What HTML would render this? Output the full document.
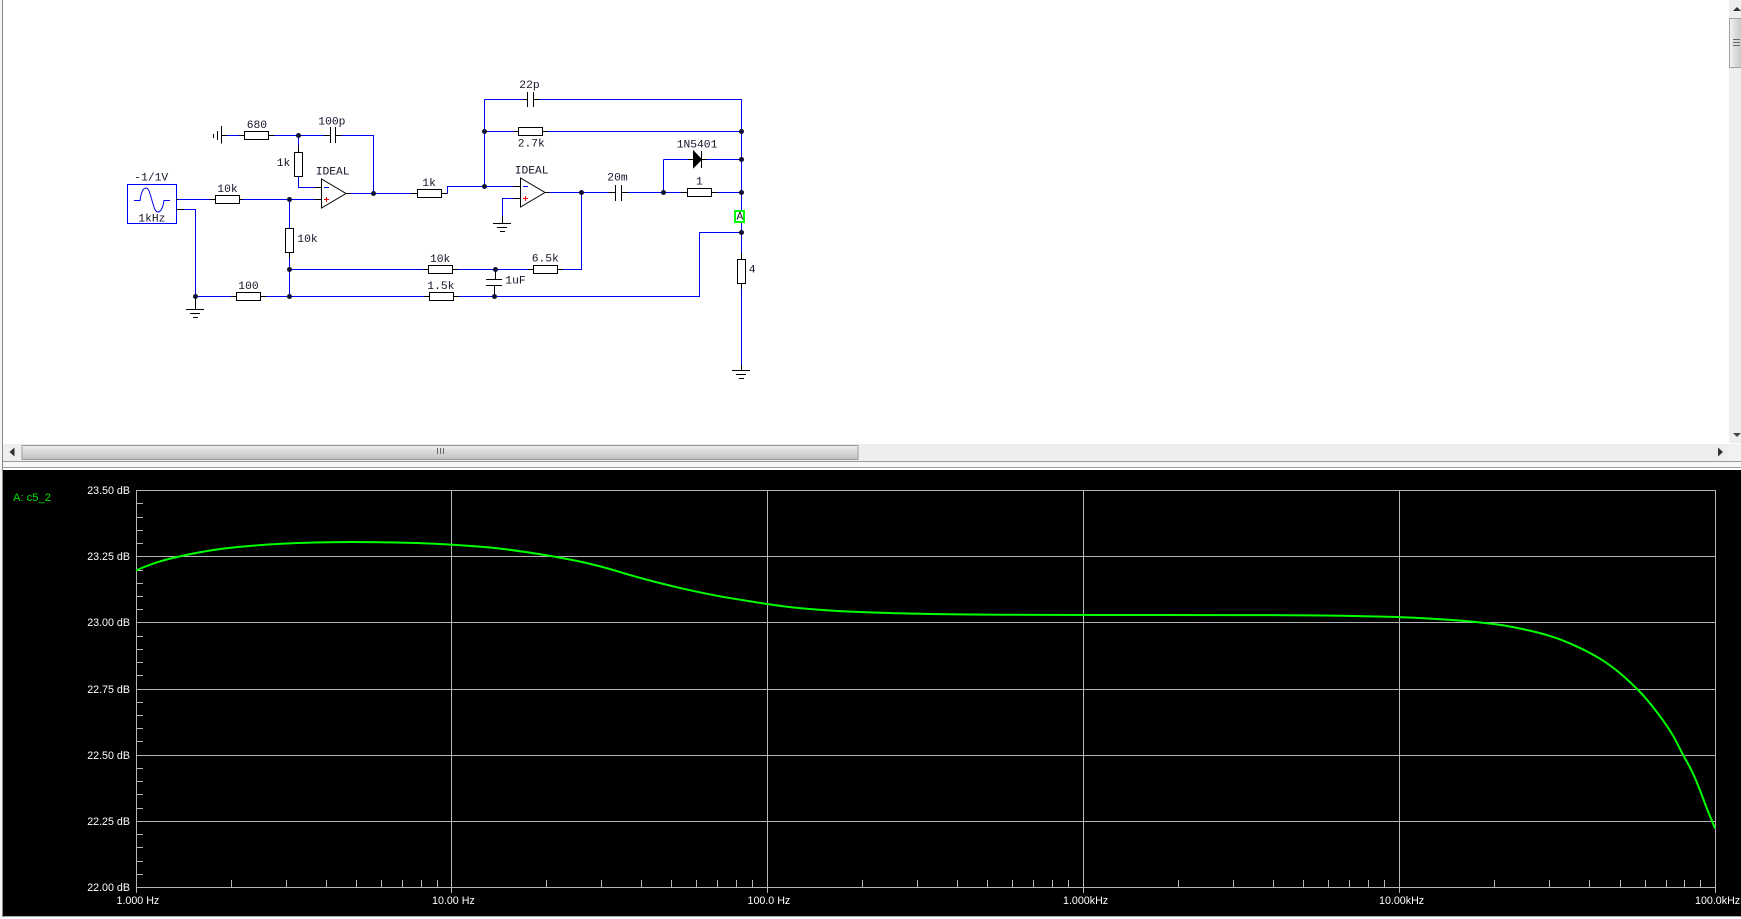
<!DOCTYPE html>
<html><head><meta charset="utf-8"><style>
html,body{margin:0;padding:0;background:#fff;width:1741px;height:919px;overflow:hidden}
svg{position:absolute;left:0;top:0;display:block}
.m{font-family:"Liberation Mono",monospace;font-size:11.3px;fill:#141428}
.p{font-family:"Liberation Sans",sans-serif;font-size:10.7px;fill:#fff}
</style></head><body>
<svg width="1741" height="919" viewBox="0 0 1741 919" xmlns="http://www.w3.org/2000/svg">
<defs>
<linearGradient id="h" x1="0" y1="0" x2="0" y2="1"><stop offset="0" stop-color="#f0f0f0"/><stop offset=".45" stop-color="#d8d8d8"/><stop offset="1" stop-color="#c0c0c0"/></linearGradient>
<linearGradient id="v" x1="0" y1="0" x2="1" y2="0"><stop offset="0" stop-color="#f4f4f4"/><stop offset=".5" stop-color="#dcdcdc"/><stop offset="1" stop-color="#c8c8c8"/></linearGradient>
</defs>
<rect width="1741" height="919" fill="#fff"/>
<rect x="0" y="0" width="2" height="919" fill="#f4f4f4"/>
<rect x="2" y="0" width="1" height="917" fill="#8a8a8a"/>

<!-- vertical scrollbar -->
<rect x="1729" y="0" width="12" height="443" fill="#eeeeee"/>
<path d="M1737 7l4 4h-8z" fill="#333"/>
<rect x="1729.5" y="18.5" width="12" height="49" fill="url(#v)" stroke="#a0a0a0"/>
<path d="M1733 39.5h7M1733 42.5h7M1733 45.5h7" stroke="#666" fill="none" shape-rendering="crispEdges"/>
<path d="M1733 433h8l-4 4z" fill="#444"/>

<!-- horizontal scrollbar -->
<rect x="3" y="444" width="1738" height="17" fill="#eeeeee"/>
<rect x="1727" y="444" width="14" height="17" fill="#f2f2f2"/>
<path d="M14.5 447.5v9l-5-4.5z" fill="#333"/>
<rect x="22" y="445.5" width="836" height="14" fill="url(#h)" stroke="#999" shape-rendering="crispEdges"/>
<path d="M437.5 448v6M440.5 448v6M443.5 448v6" stroke="#666" fill="none" shape-rendering="crispEdges"/>
<path d="M1718 447.5v9l5-4.5z" fill="#333"/>
<rect x="3" y="461" width="1738" height="1" fill="#9a9a9a"/>
<rect x="3" y="462" width="1738" height="5" fill="#f6f6f6"/>
<rect x="3" y="467" width="1738" height="1" fill="#9a9a9a"/>
<rect x="3" y="468" width="1738" height="2" fill="#fff"/>

<!-- plot -->
<rect x="3" y="470" width="1738" height="446" fill="#000"/>
<rect x="3" y="916" width="1738" height="1" fill="#a8a8a8"/>
<g stroke="#b4b4b4" stroke-width="1" fill="none" shape-rendering="crispEdges">
<path d="M136 490.5H1716M136 556.5H1716M136 622.5H1716M136 689.5H1716M136 755.5H1716M136 821.5H1716M136 887.5H1716"/>
<path d="M136.5 490V893M451.5 490V893M767.5 490V893M1083.5 490V893M1399.5 490V893M1715.5 490V893"/>
<path d="M136 503.5h7M136 517.5h7M136 530.5h7M136 543.5h7M136 570.5h7M136 583.5h7M136 596.5h7M136 609.5h7M136 636.5h7M136 649.5h7M136 662.5h7M136 675.5h7M136 702.5h7M136 715.5h7M136 728.5h7M136 741.5h7M136 768.5h7M136 781.5h7M136 794.5h7M136 808.5h7M136 834.5h7M136 847.5h7M136 861.5h7M136 874.5h7"/>
<path d="M231.5 880v7M286.5 880v7M326.5 880v7M356.5 880v7M381.5 880v7M402.5 880v7M421.5 880v7M437.5 880v7M546.5 880v7M601.5 880v7M641.5 880v7M671.5 880v7M696.5 880v7M717.5 880v7M736.5 880v7M752.5 880v7M862.5 880v7M917.5 880v7M957.5 880v7M987.5 880v7M1012.5 880v7M1033.5 880v7M1052.5 880v7M1068.5 880v7M1178.5 880v7M1233.5 880v7M1273.5 880v7M1303.5 880v7M1328.5 880v7M1349.5 880v7M1368.5 880v7M1384.5 880v7M1494.5 880v7M1549.5 880v7M1589.5 880v7M1620.5 880v7M1645.5 880v7M1666.5 880v7M1684.5 880v7M1700.5 880v7"/>
</g>
<path fill="none" stroke="#00ff00" stroke-width="2" d="M136 570.5Q144 566.7 152.3 563.9Q160.5 561 172.8 558Q185 555 201.3 552Q217.6 549 238 547Q258.4 545 278.9 543.9Q299.3 542.7 327.9 542.2Q356.4 541.7 389 542.4Q421.7 543 436.6 543.9Q451.5 544.7 471.3 546Q491 547.3 507.5 549.5Q524 551.7 540.2 554.2Q556.4 556.7 576.7 560.9Q597 565 621.5 572.5Q646 580 676.7 587.2Q707.4 594.3 727.7 597.7Q748 601 766.3 603.9Q784.5 606.7 800.8 608.2Q817 609.7 833.5 610.7Q850 611.7 880.5 612.7Q911 613.7 960 614.4Q1009 615 1158 615Q1307 615 1341.5 615.8Q1376 616.5 1388 616.7Q1400 616.9 1421.5 618.1Q1443 619.3 1461.5 620.7Q1480 622 1496.5 624.4Q1513 626.7 1533 631.4Q1553 636 1570 643.4Q1587 650.7 1600 658.7Q1613 666.7 1625.5 678Q1638 689.3 1645.5 698Q1653 706.7 1662.5 719.7Q1672 732.7 1677.5 743.9Q1683 755 1687.5 762.9Q1692 770.7 1696 780.4Q1700 790 1704 800.9Q1708 811.7 1715 828.3"/>
<g class="p">
<text x="130" y="494" text-anchor="end" class="p">23.50 dB</text>
<text x="130" y="560" text-anchor="end" class="p">23.25 dB</text>
<text x="130" y="626" text-anchor="end" class="p">23.00 dB</text>
<text x="130" y="693" text-anchor="end" class="p">22.75 dB</text>
<text x="130" y="759" text-anchor="end" class="p">22.50 dB</text>
<text x="130" y="825" text-anchor="end" class="p">22.25 dB</text>
<text x="130" y="891" text-anchor="end" class="p">22.00 dB</text>
<text x="116.5" y="904" class="p">1.000 Hz</text>
<text x="432" y="904" class="p">10.00 Hz</text>
<text x="747.5" y="904" class="p">100.0 Hz</text>
<text x="1063" y="904" class="p">1.000kHz</text>
<text x="1379" y="904" class="p">10.00kHz</text>
<text x="1695" y="904" class="p">100.0kHz</text>
</g>
<text x="13" y="501" style="font-family:'Liberation Sans',sans-serif;font-size:11.2px;fill:#00e000">A: c5_2</text>

<!-- circuit: blue wires -->
<g fill="none" stroke="#0000f0" stroke-width="1" shape-rendering="crispEdges">
<rect x="127.5" y="184.5" width="49" height="39"/>
<path d="M176 199.5H210M243 199.5H315"/>
<path d="M184 209.5H195.5V296.5H231M266 296.5H424M289.5 199.5V228M289.5 258V296.5M289.5 269.5H423"/>
<path d="M238 135.5H239M238 135.5H227M274 135.5H324M341 135.5H373.5V193.5M350 193.5H411M298.5 135.5V146M298.5 176V187.5H315"/>
<path d="M447.5 193.5V186.5H514M484.5 99.5V186.5M484.5 99.5H523M539 99.5H741.5V210M484.5 131.5H514M548 131.5H741.5"/>
<path d="M458 269.5H533M563 269.5H581.5V192.5M549 192.5H609M628 192.5H681M717 192.5H741.5M663.5 159.5V192.5M663.5 159.5H688M707 159.5H741.5"/>
<path d="M459 296.5H699.5V232.5H741.5M741.5 223V253M741.5 289V365"/>
<path d="M514 198.5H502.5V223"/>
</g>
<path d="M134 200.5H140C141 193 143 188 146 188C149 188 150 194 152 200.5C154 207 155 212 158 212C161 212 163 207 164 200.5H170" fill="none" stroke="#0000f0" stroke-width="1"/>

<!-- circuit: black components -->
<g fill="#fff" stroke="#000" stroke-width="1" shape-rendering="crispEdges">
<rect x="215.5" y="195.5" width="24" height="8"/>
<rect x="244.5" y="131.5" width="24" height="8"/>
<rect x="294.5" y="152.5" width="8" height="24"/>
<rect x="285.5" y="228.5" width="8" height="24"/>
<rect x="236.5" y="292.5" width="24" height="8"/>
<rect x="417.5" y="189.5" width="24" height="8"/>
<rect x="428.5" y="265.5" width="24" height="8"/>
<rect x="429.5" y="292.5" width="24" height="8"/>
<rect x="533.5" y="265.5" width="24" height="8"/>
<rect x="518.5" y="127.5" width="24" height="8"/>
<rect x="687.5" y="188.5" width="24" height="8"/>
<rect x="737.5" y="259.5" width="8" height="24"/>
</g>
<g fill="none" stroke="#000" stroke-width="1" shape-rendering="crispEdges">
<path d="M176 199.5H178M210 199.5H215M239 199.5H243M176 209.5H184"/>
<path d="M221.5 126V143.5M217.5 131V140M213.5 134V138M221.5 135.5H227M239 135.5H244M268 135.5H274M324 135.5H330.5M335.5 135.5H341M330.5 127V143M335.5 127V143"/>
<path d="M298.5 146V152"/>
<path d="M315 187.5H321M315 199.5H321M346 193.5H350M411 193.5H417M441 193.5H447.5"/>
<path d="M289.5 252V258M231 296.5H236M260 296.5H266M423 269.5H428M424 296.5H429M452 269.5H458M453 296.5H459M528 269.5H533M557 269.5H563"/>
<path d="M195.5 296.5V309M186 309.5H204M190 313.5H200M193 317.5H198"/>
<path d="M523 99.5H527.5M533.5 99.5H539M527.5 92V107M533.5 92V107M514 131.5H518M542 131.5H548M514 186.5H520M514 198.5H520"/>
<path d="M545 192.5H549M609 192.5H615.5M621.5 192.5H628M615.5 185V201M621.5 185V201M681 192.5H687M711 192.5H717"/>
<path d="M688 159.5H693M701.5 151V168M701.5 159.5H707"/>
<path d="M495.5 269.5V279.5M486 279.5H502M486 285.5H502M494.5 285.5V296.5"/>
<path d="M741.5 253V259M741.5 283V289M741.5 365V370M732 370.5H750M736 374.5H746M739 378.5H744"/>
<path d="M502.5 216V223M493 223.5H511M497 227.5H507M500 231.5H505"/>
</g>
<path d="M321.5 179V208L346 193.5Z" fill="#fff" stroke="#000"/>
<path d="M520.5 178V207L545 192.5Z" fill="#fff" stroke="#000"/>
<path d="M693.5 151V167.5L701.5 159.5Z" fill="#000" stroke="#000"/>
<path d="M324 187.5H329" stroke="#0000f0" shape-rendering="crispEdges"/>
<path d="M523 186.5H528" stroke="#0000f0" shape-rendering="crispEdges"/>
<path d="M324 199.5H329M326.5 197V202" stroke="#f00000" shape-rendering="crispEdges"/>
<path d="M523 198.5H528M525.5 196V201" stroke="#f00000" shape-rendering="crispEdges"/>

<!-- junction dots -->
<g fill="#101030">
<circle cx="195.5" cy="296.5" r="2.5"/><circle cx="289.5" cy="199.5" r="2.5"/><circle cx="289.5" cy="269.5" r="2.5"/><circle cx="289.5" cy="296.5" r="2.5"/>
<circle cx="298.5" cy="135.5" r="2.5"/><circle cx="373.5" cy="193.5" r="2.5"/><circle cx="484.5" cy="131.5" r="2.5"/><circle cx="484.5" cy="186.5" r="2.5"/>
<circle cx="581.5" cy="192.5" r="2.5"/><circle cx="663.5" cy="192.5" r="2.5"/><circle cx="741.5" cy="131.5" r="2.5"/><circle cx="741.5" cy="159.5" r="2.5"/>
<circle cx="741.5" cy="192.5" r="2.5"/><circle cx="741.5" cy="232.5" r="2.5"/><circle cx="495.5" cy="269.5" r="2.5"/><circle cx="494.5" cy="296.5" r="2.5"/>
</g>

<!-- A marker -->
<rect x="735" y="211" width="9" height="11" fill="#fff" stroke="#00ff00" stroke-width="2" shape-rendering="crispEdges"/>

<!-- labels -->
<g>
<text class="m" x="246.7" y="128">680</text>
<text class="m" x="318.3" y="124.3">100p</text>
<text class="m" x="276.7" y="166">1k</text>
<text class="m" x="315.7" y="174.7">IDEAL</text>
<text class="m" x="422.3" y="186">1k</text>
<text class="m" x="134.3" y="180.7">-1/1V</text>
<text class="m" x="138.3" y="221.3">1kHz</text>
<text class="m" x="217.3" y="192">10k</text>
<text class="m" x="297.3" y="242">10k</text>
<text class="m" x="430" y="262">10k</text>
<text class="m" x="238.3" y="289">100</text>
<text class="m" x="427.3" y="289">1.5k</text>
<text class="m" x="519.3" y="88">22p</text>
<text class="m" x="517.7" y="146.7">2.7k</text>
<text class="m" x="676.7" y="147.7">1N5401</text>
<text class="m" x="514.7" y="173.7">IDEAL</text>
<text class="m" x="607.3" y="180.7">20m</text>
<text class="m" x="696" y="184.7">1</text>
<text class="m" x="736.5" y="219.3">A</text>
<text class="m" x="531.7" y="261.7">6.5k</text>
<text class="m" x="505.3" y="283.3">1uF</text>
<text class="m" x="748.7" y="272.7">4</text>
</g>
</svg>
</body></html>
